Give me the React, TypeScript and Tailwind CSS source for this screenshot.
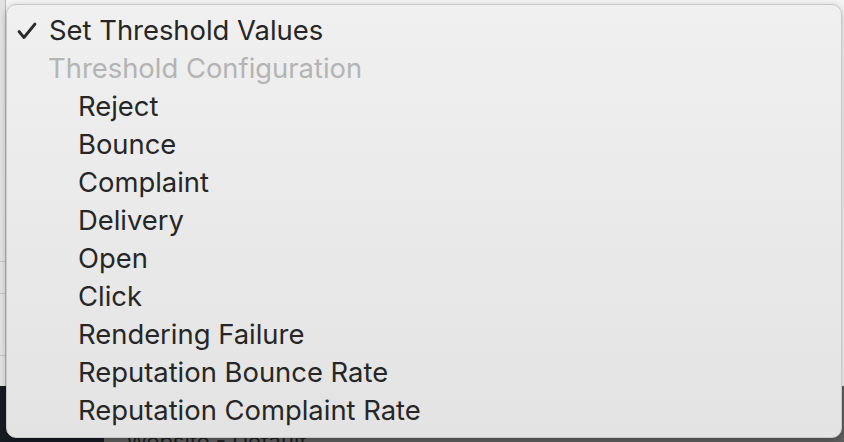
const items = [
  "Reject",
  "Bounce",
  "Complaint",
  "Delivery",
  "Open",
  "Click",
  "Rendering Failure",
  "Reputation Bounce Rate",
  "Reputation Complaint Rate",
];

export default function App() {
  return (
    <div
      className="relative w-[844px] h-[442px] overflow-hidden bg-[#f3f3f3]"
      style={{ fontFamily: "Inter, 'Noto Sans', sans-serif" }}
    >
      {/* page behind the menu */}
      <div className="flex flex-col h-full">
        <div className="flex h-[386px] shrink-0">
          <div className="w-[6px] flex flex-col bg-[#e2e2e2] border-r border-[#b9b9b9]">
            <div className="h-[262px] border-b border-[#c4c4c4]" />
            <div className="h-[32px] border-b border-[#c4c4c4]" />
            <div className="h-[62px] border-b border-[#c4c4c4]" />
          </div>
          <div className="flex-1" />
        </div>
        <div className="flex flex-1 min-h-0 overflow-hidden">
          <div className="w-[104px] bg-[#171b22]" />
          <div className="flex-1 bg-[#5e5e5e] pl-[22px] pt-[44px] text-[22px] text-[#1d1d1d] leading-none">
            Website - Default
          </div>
        </div>
      </div>

      {/* dropdown menu */}
      <div className="absolute left-[6px] top-[4px] w-[836px] h-[434px] rounded-[10px] border border-[#c9c9c9] bg-gradient-to-b from-[#f0f0f0] to-[#e3e3e3] shadow-[0_2px_6px_rgba(0,0,0,0.25)] pt-[7px] text-[27.4px] leading-none">
        <div className="flex items-center h-[38px] text-[#262626]">
          <svg
            viewBox="0 0 20 18"
            className="ml-[10px] w-[20px] h-[18px] shrink-0"
            fill="none"
            stroke="#2a2a2a"
            strokeWidth={2.8}
            strokeLinecap="round"
            strokeLinejoin="round"
          >
            <path d="M2 9.5 L7 15.5 L18 2" />
          </svg>
          <span className="ml-[12px]">Set Threshold Values</span>
        </div>
        <div className="flex items-center h-[38px] pl-[41px] text-[#b4b4b4]">
          Threshold Configuration
        </div>
        {items.map((label) => (
          <div
            key={label}
            className="flex items-center h-[38px] pl-[71px] text-[#262626]"
          >
            {label}
          </div>
        ))}
      </div>
    </div>
  );
}
